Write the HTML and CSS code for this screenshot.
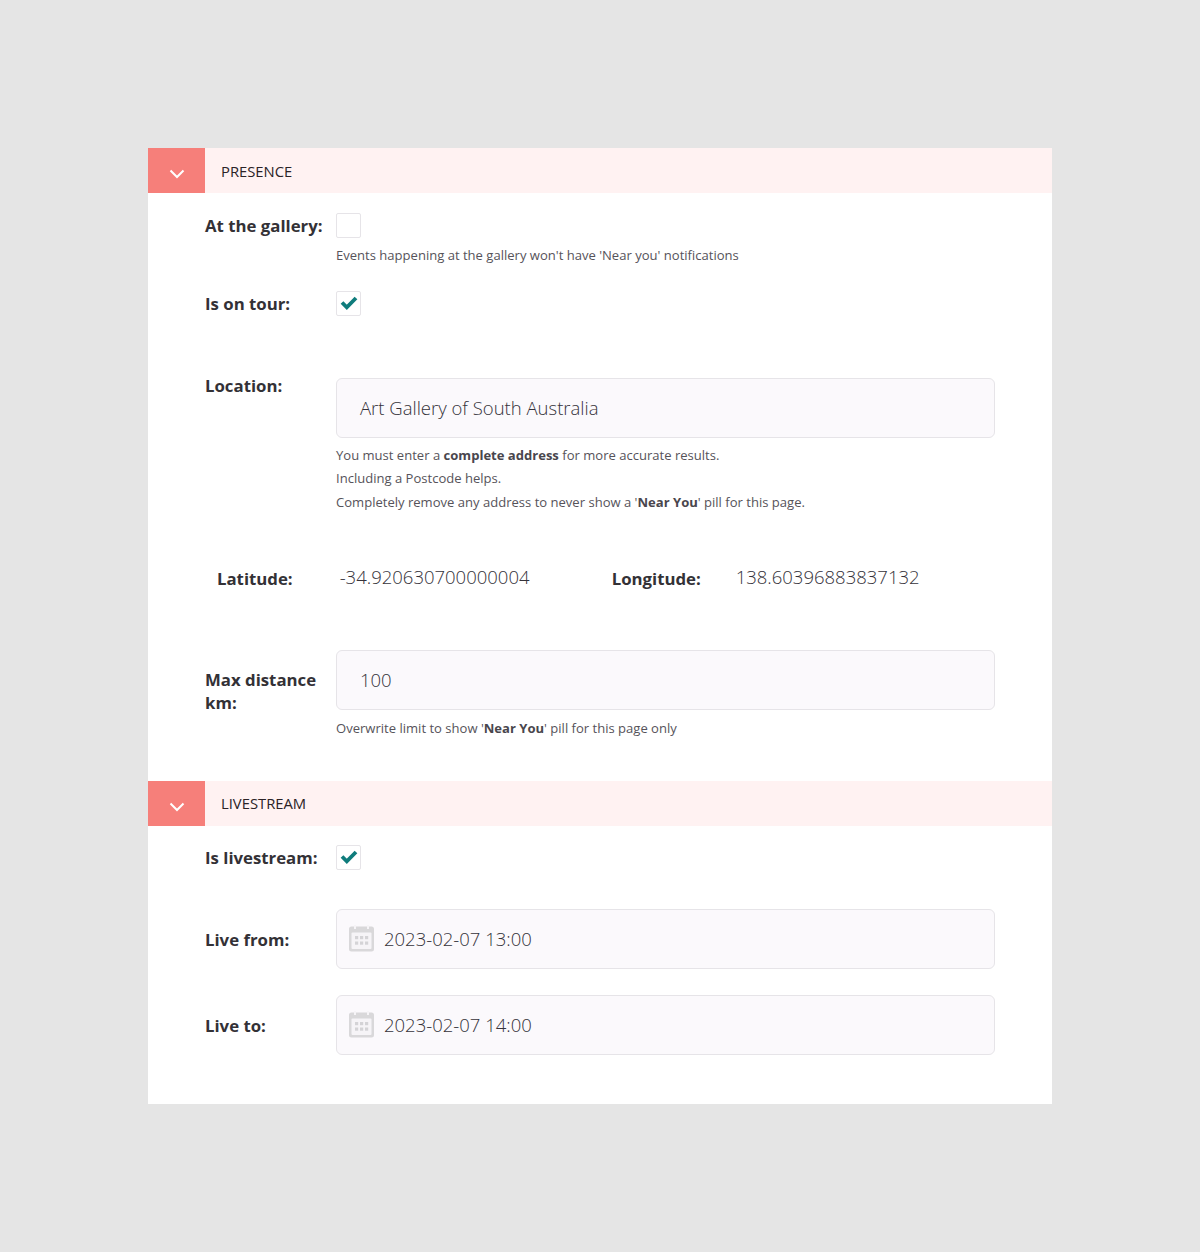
FILE: index.html
```html
<!DOCTYPE html>
<html lang="en">
<head>
<meta charset="utf-8">
<title>Presence and livestream</title>
<link rel="stylesheet" href="styles.css">
</head>
<body>
<main class="card">
  <section class="section-presence">
    <header class="bar">
      <span class="toggle"><svg width="16" height="10" viewBox="0 0 16 10"><path d="M1.500 1.500 8 8l6.500-6.500" fill="none" stroke="#fff" stroke-width="2"/></svg></span>
      <h2 class="bar-title">PRESENCE</h2>
    </header>
    <div class="fields">
      <div class="row row-gallery">
        <label class="label">At the gallery:</label>
        <div class="control">
          <span class="check"></span>
          <p class="hint hint-gallery">Events happening at the gallery won't have 'Near you' notifications</p>
        </div>
      </div>
      <div class="row row-tour">
        <label class="label">Is on tour:</label>
        <div class="control"><span class="check"><svg width="18" height="14" viewBox="0 0 18 14"><path d="M2 6.500l4.800 4.800L16 2" fill="none" stroke="#0f7c7c" stroke-width="3.800"/></svg></span></div>
      </div>
      <div class="row row-location">
        <label class="label label-input-top">Location:</label>
        <div class="control">
          <div class="input">Art Gallery of South Australia</div>
          <div class="hints">
            <p class="hint">You must enter a <b>complete address</b> for more accurate results.</p>
            <p class="hint">Including a Postcode helps.</p>
            <p class="hint">Completely remove any address to never show a '<b>Near You</b>' pill for this page.</p>
          </div>
        </div>
      </div>
      <div class="coords">
        <span class="label label-lat">Latitude:</span>
        <span class="coord coord-lat">-34.920630700000004</span>
        <span class="label label-long">Longitude:</span>
        <span class="coord">138.60396883837132</span>
      </div>
      <div class="row row-distance">
        <label class="label label-distance">Max distance km:</label>
        <div class="control">
          <div class="input">100</div>
          <p class="hint hint-distance">Overwrite limit to show '<b>Near You</b>' pill for this page only</p>
        </div>
      </div>
    </div>
  </section>
  <section class="section-live">
    <header class="bar">
      <span class="toggle"><svg width="16" height="10" viewBox="0 0 16 10"><path d="M1.500 1.500 8 8l6.500-6.500" fill="none" stroke="#fff" stroke-width="2"/></svg></span>
      <h2 class="bar-title">LIVESTREAM</h2>
    </header>
    <div class="fields">
      <div class="row row-live">
        <label class="label">Is livestream:</label>
        <div class="control"><span class="check"><svg width="18" height="14" viewBox="0 0 18 14"><path d="M2 6.500l4.800 4.800L16 2" fill="none" stroke="#0f7c7c" stroke-width="3.800"/></svg></span></div>
      </div>
      <div class="row row-date row-from">
        <label class="label">Live from:</label>
        <div class="control">
          <div class="input input-date">
            <svg class="cal" width="27" height="28" viewBox="0 0 27 28"><path d="M3.500 2.500h20a2.500 2.500 0 0 1 2.500 2.500v20a2.500 2.500 0 0 1-2.500 2.500h-20A2.500 2.500 0 0 1 1 25V5a2.500 2.500 0 0 1 2.500-2.500z" fill="#d9d8da"/><rect x="3.500" y="8.500" width="20" height="16.500" rx="1" fill="#f6f4f7"/><rect x="6" y="1" width="2" height="4" fill="#f6f4f7"/><rect x="19" y="1" width="2" height="4" fill="#f6f4f7"/><g fill="#d4d3d6"><rect x="7" y="12" width="3.200" height="3.200"/><rect x="12" y="12" width="3.200" height="3.200"/><rect x="17" y="12" width="3.200" height="3.200"/><rect x="7" y="17.500" width="3.200" height="3.200"/><rect x="12" y="17.500" width="3.200" height="3.200"/><rect x="17" y="17.500" width="3.200" height="3.200"/></g></svg>
            <span>2023-02-07 13:00</span>
          </div>
        </div>
      </div>
      <div class="row row-date row-to">
        <label class="label">Live to:</label>
        <div class="control">
          <div class="input input-date">
            <svg class="cal" width="27" height="28" viewBox="0 0 27 28"><path d="M3.500 2.500h20a2.500 2.500 0 0 1 2.500 2.500v20a2.500 2.500 0 0 1-2.500 2.500h-20A2.500 2.500 0 0 1 1 25V5a2.500 2.500 0 0 1 2.500-2.500z" fill="#d9d8da"/><rect x="3.500" y="8.500" width="20" height="16.500" rx="1" fill="#f6f4f7"/><rect x="6" y="1" width="2" height="4" fill="#f6f4f7"/><rect x="19" y="1" width="2" height="4" fill="#f6f4f7"/><g fill="#d4d3d6"><rect x="7" y="12" width="3.200" height="3.200"/><rect x="12" y="12" width="3.200" height="3.200"/><rect x="17" y="12" width="3.200" height="3.200"/><rect x="7" y="17.500" width="3.200" height="3.200"/><rect x="12" y="17.500" width="3.200" height="3.200"/><rect x="17" y="17.500" width="3.200" height="3.200"/></g></svg>
            <span>2023-02-07 14:00</span>
          </div>
        </div>
      </div>
    </div>
  </section>
</main>
</body>
</html>
```
FILE: styles.css
```css
* { box-sizing: border-box; }
html, body { margin: 0; padding: 0; }
body {
  background: #e5e5e5;
  font-family: "Open Sans", sans-serif;
  color: #333136;
  height: 1252px;
  padding: 148px 148px 0;
}
.card {
  background: #fff;
  height: 956px;
}
.bar {
  display: flex;
  align-items: center;
  height: 45px;
  background: #fff2f2;
}
.toggle {
  display: flex;
  align-items: center;
  justify-content: center;
  width: 57px;
  height: 45px;
  padding-top: 7px;
  background: #f67f7a;
}
.bar-title {
  margin: 0 0 0 16px;
  font-size: 14.800px;
  font-weight: 400;
  color: #2b2226;
}
.fields { padding: 0 57px; }
.row {
  display: grid;
  grid-template-columns: 131px 1fr;
}
.label {
  font-size: 16.800px;
  font-weight: 700;
  line-height: 23px;
  color: #333136;
}
.control { min-width: 0; }
.check {
  display: flex;
  align-items: center;
  justify-content: center;
  width: 25px;
  height: 25px;
  border: 1px solid #e6e4e8;
  border-radius: 2px;
  background: #fff;
}
.hint {
  margin: 0;
  font-size: 13.060px;
  line-height: 23.500px;
  color: #56535a;
}
.hint b { font-weight: 700; color: #49464d; }
.input {
  display: flex;
  align-items: center;
  height: 60px;
  padding-left: 23px;
  padding-bottom: 1px;
  background: #fbf9fc;
  border: 1px solid #e6e4e8;
  border-radius: 6px;
  font-size: 18.500px;
  font-weight: 300;
  color: #35323a;
}
.input-date { padding-left: 11px; gap: 9px; }
.row-gallery { padding-top: 20px; }
.row-gallery .label { line-height: 26px; }
.hint-gallery { margin-top: 6px; }
.row-tour { margin-top: 23px; }
.row-tour .label { line-height: 26px; }
.row-location { margin-top: 61px; }
.label-input-top { margin-top: -4px; }
.hints { margin-top: 6px; }
.coords {
  display: flex;
  align-items: center;
  height: 24px;
  margin-top: 50px;
  padding-left: 12px;
}
.coords .label { padding-top: 4px; }
.coord {
  font-size: 18.500px;
  font-weight: 300;
  color: #35323a;
}
.coord-lat { width: 272px; margin-left: 47px; }
.label-long { width: 124px; }
.row-distance { margin-top: 62px; }
.label-distance { padding-top: 18px; padding-right: 10px; }
.hint-distance { margin-top: 7px; }
.section-live { margin-top: 40px; }
.row-live { padding-top: 19px; }
.row-live .label { line-height: 26px; }
.row-date { align-items: center; }
.row-date .label { padding-top: 2px; }
.row-from { margin-top: 38px; }
.row-to { margin-top: 26px; }
```
